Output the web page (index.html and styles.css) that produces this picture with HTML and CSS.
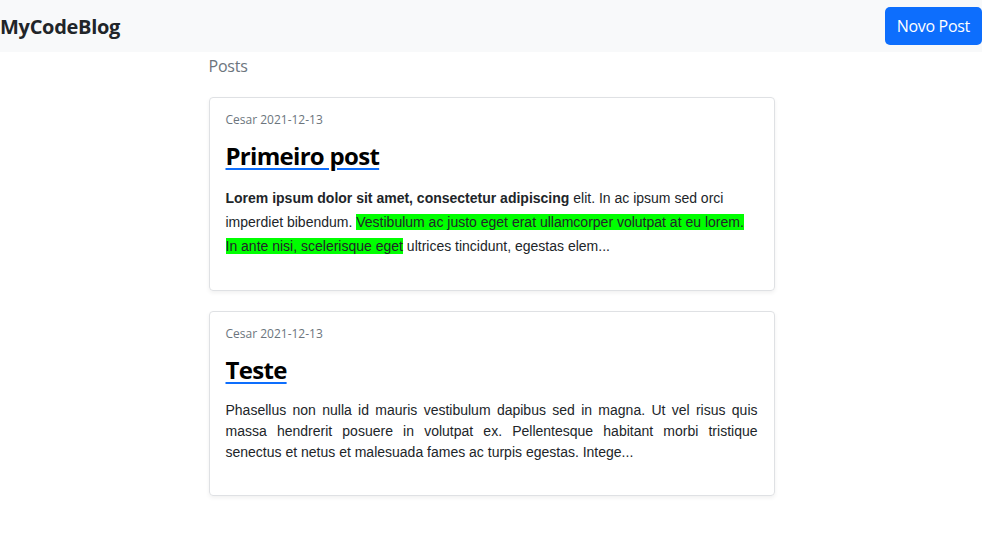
FILE: index.html
```html
<!DOCTYPE html>
<html lang="pt">
<head>
<meta charset="utf-8">
<title>MyCodeBlog</title>
<link rel="stylesheet" href="styles.css">
</head>
<body>
<nav class="navbar">
  <a class="brand" href="#">MyCodeBlog</a>
  <a class="btn" href="#">Novo Post</a>
</nav>
<main class="container">
  <h6 class="section-title">Posts</h6>
  <article class="card">
    <div class="meta">Cesar 2021-12-13</div>
    <h2 class="title"><a href="#">Primeiro post</a></h2>
    <p class="body body-loose"><strong>Lorem ipsum dolor sit amet, consectetur adipiscing</strong> elit. In ac ipsum sed orci imperdiet bibendum. <span class="hl">Vestibulum ac justo eget erat ullamcorper volutpat at eu lorem. In ante nisi, scelerisque eget</span> ultrices tincidunt, egestas elem...</p>
  </article>
  <article class="card">
    <div class="meta">Cesar 2021-12-13</div>
    <h2 class="title"><a href="#">Teste</a></h2>
    <p class="body body-justify">Phasellus non nulla id mauris vestibulum dapibus sed in magna. Ut vel risus quis massa hendrerit posuere in volutpat ex. Pellentesque habitant morbi tristique senectus et netus et malesuada fames ac turpis egestas. Intege...</p>
  </article>
</main>
</body>
</html>
```
FILE: styles.css
```css
* { box-sizing: border-box; }
html, body { margin: 0; padding: 0; }
body {
  font-family: "Open Sans", "Noto Sans", sans-serif;
  color: #212529;
  background: #fff;
}
.navbar {
  height: 52px;
  background: #f8f9fa;
  display: flex;
  align-items: center;
  justify-content: space-between;
}
.brand {
  font-size: 20px;
  font-weight: 700;
  color: #212529;
  text-decoration: none;
  letter-spacing: -0.3px;
}
.btn {
  display: inline-block;
  background: #0d6efd;
  color: #fff;
  text-decoration: none;
  font-size: 16px;
  line-height: 24px;
  padding: 7px 12px;
  border-radius: 5px;
  letter-spacing: -0.3px;
}
.container {
  width: 567px;
  margin: 0 auto;
  padding: 5px 0 0 1px;
}
.section-title {
  margin: 0 0 21px;
  font-size: 16px;
  font-weight: 400;
  line-height: 19px;
  color: #6c757d;
  letter-spacing: -0.2px;
}
.card {
  border: 1px solid #dfe1e4;
  border-radius: 4px;
  box-shadow: 0 2px 4px rgba(0,0,0,0.06);
  padding: 16px;
  margin-bottom: 20px;
}
.meta {
  font-size: 12px;
  line-height: 12px;
  color: #6c757d;
}
.title {
  margin: 15px 0 16px;
  font-size: 24px;
  line-height: 29px;
  font-weight: 700;
  letter-spacing: -0.7px;
}
.title a {
  color: #000;
  text-decoration: underline;
  text-decoration-color: #0d6efd;
  text-underline-offset: 3px;
  text-decoration-thickness: 2px;
}
.body {
  font-family: "Liberation Sans", Arial, sans-serif;
  font-size: 14px;
  margin: 0 0 16px;
  color: #212529;
}
.body-loose { line-height: 24px; }
.body-justify { line-height: 21px; text-align: justify; margin-bottom: 16px; }
.hl { background: #00ff00; }
```
